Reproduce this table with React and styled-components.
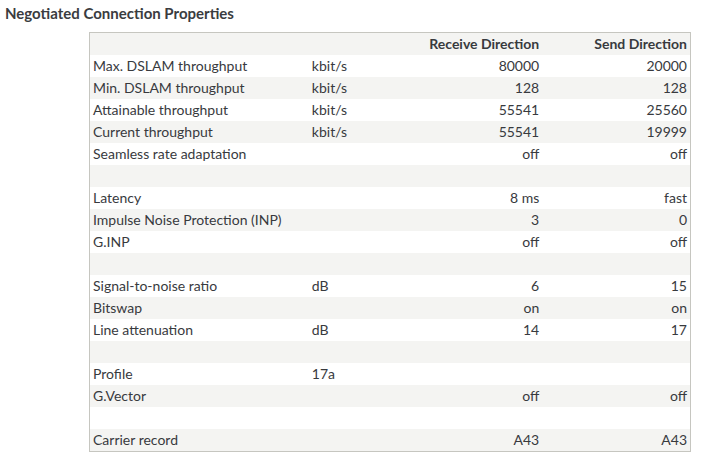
import React from 'react';
import styled, {createGlobalStyle} from 'styled-components';

const GlobalStyle = createGlobalStyle`
body {
    margin: 0;
    background: #ffffff;
    font-family: Lato, "Liberation Sans", sans-serif;
    color: #3c3c3c;
}
`;

const Page = styled.div`
padding: 4px 0 0 5px;
`;

const Title = styled.h2`
margin: 0 0 9px 0;
font-size: 15px;
font-weight: 700;
line-height: 19px;
color: #3a3c40;
`;

const Table = styled.table`
margin-left: 84px;
width: 602px;
border: 1px solid #c6c6c0;
border-collapse: collapse;
font-size: 14px;
table-layout: fixed;
color: #383a3e;
`;

const Row = styled.tr`
height: 22px;
background: ${(props) => (props.$odd ? '#ffffff' : '#f4f4f2')};
`;

const Cell = styled.td`
padding: 0 3px;
height: 22px;
line-height: 22px;
white-space: nowrap;
text-align: ${(props) => props.$align || 'left'};
font-weight: ${(props) => (props.$head ? 700 : 400)};
`;

const rows = [
    ['Max. DSLAM throughput', 'kbit/s', '80000', '20000'],
    ['Min. DSLAM throughput', 'kbit/s', '128', '128'],
    ['Attainable throughput', 'kbit/s', '55541', '25560'],
    ['Current throughput', 'kbit/s', '55541', '19999'],
    ['Seamless rate adaptation', '', 'off', 'off'],
    null,
    ['Latency', '', '8 ms', 'fast'],
    ['Impulse Noise Protection (INP)', '', '3', '0'],
    ['G.INP', '', 'off', 'off'],
    null,
    ['Signal-to-noise ratio', 'dB', '6', '15'],
    ['Bitswap', '', 'on', 'on'],
    ['Line attenuation', 'dB', '14', '17'],
    null,
    ['Profile', '17a', '', ''],
    ['G.Vector', '', 'off', 'off'],
    null,
    ['Carrier record', '', 'A43', 'A43'],
];

function App() {
    return (
        <Page>
            <GlobalStyle />
            <Title>Negotiated Connection Properties</Title>
            <Table>
                <colgroup>
                    <col style={{width: 219}} />
                    <col style={{width: 83}} />
                    <col style={{width: 150}} />
                    <col style={{width: 148}} />
                </colgroup>
                <tbody>
                    <Row>
                        <Cell />
                        <Cell />
                        <Cell $align="right" $head>Receive Direction</Cell>
                        <Cell $align="right" $head>Send Direction</Cell>
                    </Row>
                    {rows.map((r, i) => (
                        <Row key={i} $odd={i % 2 === 0}>
                            <Cell>{r ? r[0] : ''}</Cell>
                            <Cell>{r ? r[1] : ''}</Cell>
                            <Cell $align="right">{r ? r[2] : ''}</Cell>
                            <Cell $align="right">{r ? r[3] : ''}</Cell>
                        </Row>
                    ))}
                </tbody>
            </Table>
        </Page>
    );
}

export default App;
